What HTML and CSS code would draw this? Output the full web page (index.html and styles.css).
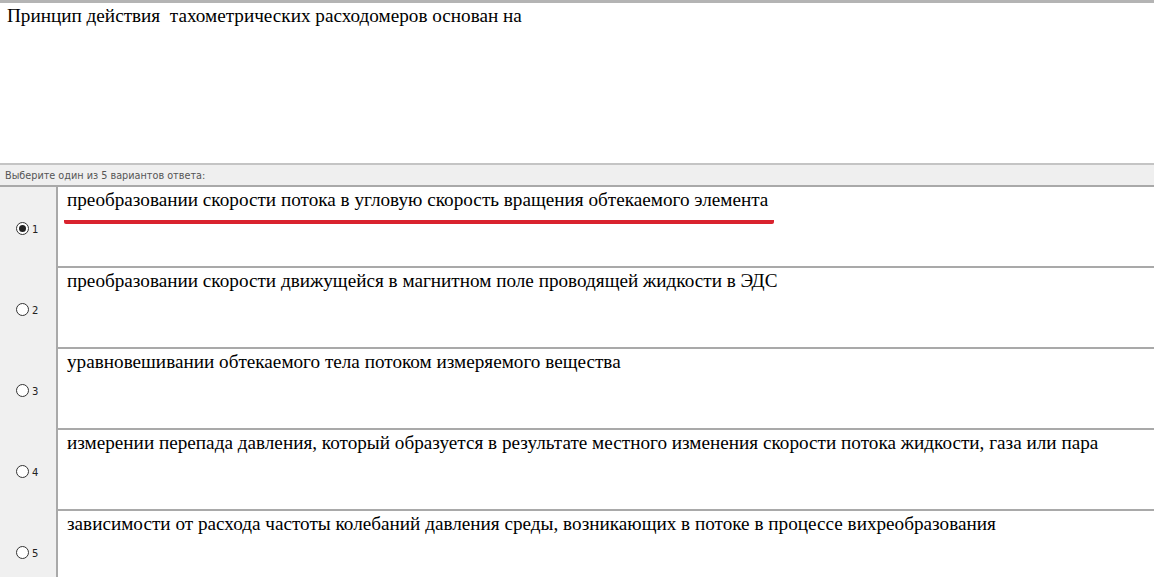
FILE: index.html
```html
<!DOCTYPE html>
<html lang="ru">
<head>
  <meta charset="UTF-8">
  <title>Тест</title>
  <link rel="stylesheet" href="styles.css">
</head>
<body>
  <div class="question">Принцип действия&nbsp; тахометрических расходомеров основан на</div>

  <div class="hint">Выберите один из 5 вариантов ответа:</div>

  <div class="answers">
    <div class="answer">
      <div class="pick"><span class="radio checked"></span><span class="num">1</span></div>
      <div class="text">
        <span class="marked">преобразовании скорости потока в угловую скорость вращения обтекаемого элемента</span>
      </div>
    </div>
    <div class="answer">
      <div class="pick"><span class="radio"></span><span class="num">2</span></div>
      <div class="text">преобразовании скорости движущейся в магнитном поле проводящей жидкости в ЭДС</div>
    </div>
    <div class="answer">
      <div class="pick"><span class="radio"></span><span class="num">3</span></div>
      <div class="text">уравновешивании обтекаемого тела потоком измеряемого вещества</div>
    </div>
    <div class="answer">
      <div class="pick"><span class="radio"></span><span class="num">4</span></div>
      <div class="text">измерении перепада давления, который образуется в результате местного изменения скорости потока жидкости, газа или пара</div>
    </div>
    <div class="answer">
      <div class="pick"><span class="radio"></span><span class="num">5</span></div>
      <div class="text">зависимости от расхода частоты колебаний давления среды, возникающих в потоке в процессе вихреобразования</div>
    </div>
  </div>
</body>
</html>
```

FILE: styles.css
```css
body {
  margin: 0;
  background: #fff;
  font-family: "Liberation Serif", serif;
  font-size: 19.2px;
  color: #000;
  overflow: hidden;
}

.question {
  border-top: 3px solid #b4b4b4;
  border-bottom: 2px solid #c4c4c4;
  height: 165px;
  padding: 2px 0 0 7px;
  box-sizing: border-box;
}

.hint {
  height: 22px;
  box-sizing: border-box;
  padding: 5px 0 0 5px;
  background: #efefef;
  border-bottom: 2px solid #a9a9a9;
  font-family: "DejaVu Sans", sans-serif;
  font-size: 9.7px;
  color: #555;
}

.answers { background: #f0f0f0; }

.answer {
  display: flex;
  height: 81px;
}

.pick {
  width: 56px;
  display: flex;
  align-items: center;
  padding-left: 16px;
  box-sizing: border-box;
  gap: 3px;
  padding-top: 1px;
}

.radio {
  width: 11px;
  height: 11px;
  border: 1px solid #333;
  border-radius: 50%;
  background: #fff;
  position: relative;
}

.radio.checked::after {
  content: "";
  position: absolute;
  left: 2px; top: 2px;
  width: 7px; height: 7px;
  border-radius: 50%;
  background: #222;
}

.num {
  font-family: "DejaVu Sans", sans-serif;
  font-size: 10px;
  color: #222;
  margin-top: 3px;
}

.text {
  flex: 1;
  background: #fff;
  border-left: 2px solid #a9a9a9;
  border-bottom: 2px solid #a9a9a9;
  padding: 2px 0 0 9px;
}

.answer:last-child .text { border-bottom: none; }

/* red pen stroke under the chosen answer */
.marked {
  display: inline-block;
  padding: 0 6px 9px 3px;
  margin-left: -3px;
  border-bottom: 4px solid #d9232e;
  border-radius: 2px;
}
```
